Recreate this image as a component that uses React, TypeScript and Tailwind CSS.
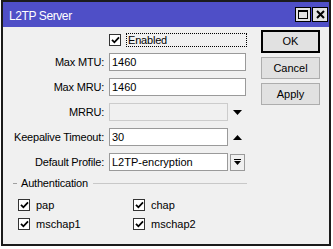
import React from "react";

function CheckBox() {
  return (
    <span className="flex h-[12px] w-[12px] shrink-0 items-center justify-center border border-[#333] bg-white">
      <svg width="9" height="8" viewBox="0 0 9 8">
        <path d="M1 3.8 L3.4 6.3 L8 1.4" stroke="#000" strokeWidth="1.8" fill="none" />
      </svg>
    </span>
  );
}

function Field({
  label,
  value,
  wide,
  disabled,
  children,
}: {
  label: string;
  value?: string;
  wide?: boolean;
  disabled?: boolean;
  children?: React.ReactNode;
}) {
  return (
    <div className="flex h-[18px] items-center">
      <div className="w-[106px] shrink-0 pr-[5px] text-right tracking-[-0.2px]">{label}</div>
      <div
        className={`flex h-[18px] items-center border pl-[2px] ${wide ? "w-[137px]" : "w-[119px]"} ${
          disabled ? "border-[#cccccc] bg-[#f0f0f0]" : "border-[#9a9a9a] bg-white"
        }`}
      >
        {value}
      </div>
      {children}
    </div>
  );
}

function AuthItem({ label }: { label: string }) {
  return (
    <div className="flex h-[12px] items-center gap-[6px] leading-none">
      <CheckBox />
      <span>{label}</span>
    </div>
  );
}

export default function App() {
  return (
    <div className="h-[249px] w-[333px] bg-white font-['Liberation_Sans',Arial,sans-serif] text-[11px] text-black">
      <div className="ml-[1px] flex h-[246px] w-[330px] flex-col border-2 border-[#1b1b1b]">
        {/* Title bar */}
        <div className="flex h-[25px] shrink-0 items-center justify-between bg-[#4f4fc7] pl-[6px] pr-[1px]">
          <span className="pt-[2px] text-[12px] tracking-[-0.4px] text-white">L2TP Server</span>
          <div className="flex gap-[1px]">
            <div className="flex h-[15px] w-[16px] items-center justify-center border border-black bg-[#e3e3e3]">
              <span className="h-[9px] w-[10px] border border-t-2 border-black" />
            </div>
            <div className="flex h-[15px] w-[16px] items-center justify-center border border-black bg-[#e3e3e3]">
              <svg width="9" height="9" viewBox="0 0 9 9">
                <path d="M1 1 L8 8 M8 1 L1 8" stroke="#000" strokeWidth="2" />
              </svg>
            </div>
          </div>
        </div>

        {/* Body */}
        <div className="flex flex-1 bg-[#f0f0f0]">
          <div className="w-[258px] shrink-0 pt-[6px]">
            <div className="flex h-[14px] items-center">
              <div className="w-[106px] shrink-0" />
              <CheckBox />
              <div className="ml-[5px] flex h-[14px] w-[121px] items-center border border-dotted border-black pl-[1px] tracking-[-0.2px]">
                Enabled
              </div>
            </div>

            <div className="mt-[6px] flex flex-col gap-[7px]">
              <Field label="Max MTU:" value="1460" wide />
              <Field label="Max MRU:" value="1460" wide />
              <Field label="MRRU:" disabled>
                <svg className="ml-[5px]" width="9" height="5" viewBox="0 0 9 5">
                  <path d="M0 0 H9 L4.5 5 Z" fill="#000" />
                </svg>
              </Field>
              <Field label="Keepalive Timeout:" value="30">
                <svg className="ml-[5px]" width="9" height="5" viewBox="0 0 9 5">
                  <path d="M0 5 H9 L4.5 0 Z" fill="#000" />
                </svg>
              </Field>
              <Field label="Default Profile:" value="L2TP-encryption">
                <div className="ml-[2px] flex h-[17px] w-[15px] items-center justify-center border border-[#9a9a9a] bg-[#f0f0f0]">
                  <svg width="7" height="7" viewBox="0 0 7 7">
                    <path d="M0 0.5 H7" stroke="#000" strokeWidth="1" />
                    <path d="M0 2 H7 L3.5 6 Z" fill="#000" />
                  </svg>
                </div>
              </Field>
            </div>

            {/* Authentication group */}
            <div className="mt-[6px] flex h-[12px] items-center pl-[10px]">
              <span className="h-px w-[4px] bg-[#a0a0a0]" />
              <span className="ml-[4px] tracking-[-0.2px]">Authentication</span>
              <span className="ml-[5px] h-px w-[154px] bg-[#c8c8c8]" />
            </div>

            <div className="mt-[10px] grid grid-cols-[115px_1fr] gap-y-[7px] pl-[15px]">
              <AuthItem label="pap" />
              <AuthItem label="chap" />
              <AuthItem label="mschap1" />
              <AuthItem label="mschap2" />
            </div>
          </div>

          {/* Buttons */}
          <div className="flex flex-col gap-[4px] pt-[3px]">
            <button className="flex h-[23px] w-[59px] items-center justify-center border-2 border-black bg-[#e1e1e1]">
              OK
            </button>
            <button className="flex h-[22px] w-[59px] items-center justify-center border border-[#adadad] bg-[#e1e1e1]">
              Cancel
            </button>
            <button className="flex h-[22px] w-[59px] items-center justify-center border border-[#adadad] bg-[#e1e1e1]">
              Apply
            </button>
          </div>
        </div>
      </div>
    </div>
  );
}
